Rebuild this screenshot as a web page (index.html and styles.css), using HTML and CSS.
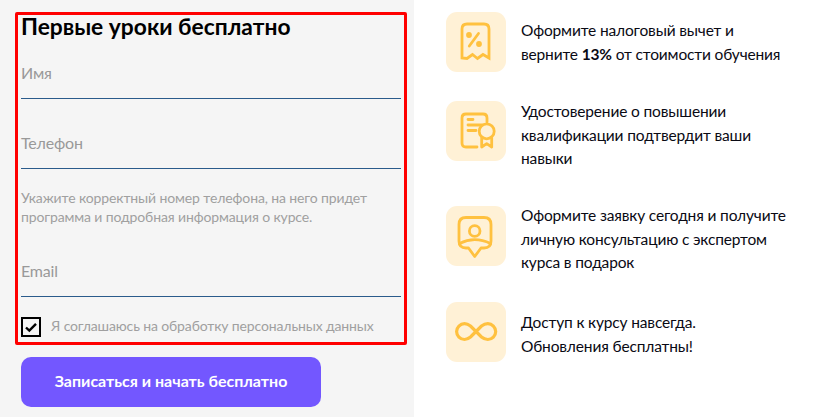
FILE: index.html
```html
<!DOCTYPE html>
<html lang="ru">
<head>
<meta charset="utf-8">
<title>Первые уроки бесплатно</title>
<link rel="stylesheet" href="styles.css">
</head>
<body>
<main class="page">
  <section class="panel">
    <form class="form">
      <h2 class="title">Первые уроки бесплатно</h2>
      <div class="field field-name"><span class="placeholder">Имя</span></div>
      <div class="field field-phone"><span class="placeholder">Телефон</span></div>
      <p class="hint">Укажите корректный номер телефона, на него придет<br>программа и подробная информация о курсе.</p>
      <div class="field field-email"><span class="placeholder">Email</span></div>
      <div class="agree">
        <span class="check">
          <svg viewBox="0 0 16 16" width="16" height="16"><path d="M3 8.500 L6.300 11.600 L13 4.800" fill="none" stroke="#000" stroke-width="2.400"/></svg>
        </span>
        <span class="agree-text">Я соглашаюсь на обработку персональных данных</span>
      </div>
    </form>
    <button class="submit" type="button">Записаться и начать бесплатно</button>
  </section>
  <section class="benefits">
    <div class="benefit b1">
      <div class="icon">
        <svg viewBox="0 0 60 60" width="60" height="60" fill="none" stroke="#ffc13f" stroke-width="2.800" stroke-linecap="round" stroke-linejoin="round">
          <path d="M16 46 V17 Q16 12 21 12 H38 Q43 12 43 17 V46 L37 42.500 L31.500 46.500 L26.500 42.500 L21 46.500 Z" stroke-linejoin="miter"/>
          <path d="M23.300 34 L32.500 21.500"/>
          <circle cx="23" cy="23" r="1.500" fill="#ffc13f"/>
          <circle cx="33" cy="32" r="1.500" fill="#ffc13f"/>
        </svg>
      </div>
      <p class="text">Оформите налоговый вычет и<br>верните <b>13%</b> от стоимости обучения</p>
    </div>
    <div class="benefit b2">
      <div class="icon">
        <svg viewBox="0 0 60 60" width="60" height="60" fill="none" stroke="#ffc13f" stroke-width="2.800" stroke-linecap="round" stroke-linejoin="round">
          <path d="M31 46 H20 Q16 46 16 42 V17 Q16 13 20 13 H37 Q41 13 41 17 V21"/>
          <path d="M22 18.500 H27 M22 24 H36 M22 29.500 H30"/>
          <circle cx="40.700" cy="30.300" r="7.500"/>
          <path d="M35.700 37 V46 L40.700 42.700 L45.700 46 V37"/>
        </svg>
      </div>
      <p class="text">Удостоверение о повышении<br>квалификации подтвердит ваши<br>навыки</p>
    </div>
    <div class="benefit b3">
      <div class="icon">
        <svg viewBox="0 0 60 60" width="60" height="60" fill="none" stroke="#ffc13f" stroke-width="2.800" stroke-linecap="round" stroke-linejoin="round">
          <path d="M20 11.500 H38 Q45 11.500 45 18.500 V35 Q45 42 38 42 H35 L28.700 50.500 L22.500 42 H20 Q13 42 13 35 V18.500 Q13 11.500 20 11.500 Z"/>
          <circle cx="28.700" cy="25" r="5.300"/>
          <path d="M13.500 37.500 Q21 33.700 28.700 33.700 Q36.500 33.700 44.500 37.500"/>
        </svg>
      </div>
      <p class="text">Оформите заявку сегодня и получите<br>личную консультацию с экспертом<br>курса в подарок</p>
    </div>
    <div class="benefit b4">
      <div class="icon">
        <svg viewBox="0 0 60 60" width="60" height="60" fill="none" stroke="#ffc13f" stroke-width="3.200" stroke-linecap="round">
          <path d="M30 29.500 L24.500 35 Q21.500 37.500 18.500 37.500 A7.900 7.900 0 0 1 18.500 21.700 Q21.500 21.700 24.500 24 L35.500 35 Q38.500 37.500 41.800 37.500 A7.900 7.900 0 0 0 41.800 21.700 Q38.500 21.700 35.500 24 L30 29.500"/>
        </svg>
      </div>
      <p class="text">Доступ к курсу навсегда.<br>Обновления бесплатны!</p>
    </div>
  </section>
</main>
</body>
</html>
```
FILE: styles.css
```css
* { box-sizing: border-box; }
html, body { margin: 0; padding: 0; background: #fff; }
body { width: 821px; height: 417px; overflow: hidden; font-family: "Lato", "Open Sans", sans-serif; }
.page { display: flex; height: 417px; }
.panel { width: 414px; height: 417px; background: #f5f5f5; padding: 12px 0 0 15px; flex: none; }
.form { width: 392px; height: 333px; border: 3px solid #f00; border-radius: 2px; padding: 0 3px; }
.title { margin: 0; font-size: 22.800px; line-height: 22px; font-weight: 700; color: #000; }
.field { border-bottom: 1px solid #2a5b8b; color: #999; font-size: 16px; line-height: 20px; letter-spacing: -0.2px; }
.field-name { margin-top: 16px; height: 46px; padding-top: 10px; }
.field-phone { margin-top: 24px; height: 46px; padding-top: 10px; }
.field-email { margin-top: 25px; height: 46px; padding-top: 10px; }
.placeholder { display: block; }
.hint { margin: 19px 0 0; font-size: 14px; line-height: 19px; color: #a0a0a0; letter-spacing: -0.12px; }
.agree { display: flex; align-items: center; margin-top: 20px; }
.check { width: 20px; height: 20px; border: 2px solid #000; display: flex; align-items: center; justify-content: center; flex: none; }
.agree-text { margin: -2px 0 0 10px; font-size: 14px; color: #a0a0a0; line-height: 18px; letter-spacing: -0.13px; }
.submit { display: block; margin: 12px 0 0 6px; width: 300px; height: 50px; padding: 0 0 3px; border: 0; border-radius: 10px; background: #7357ff; color: #fff; font: 700 16px "Lato", sans-serif; }
.benefits { padding: 12px 0 0 32px; flex: 1; }
.benefit { display: flex; align-items: flex-start; height: 60px; }
.b2 { margin-top: 29px; }
.b3 { margin-top: 45px; }
.b4 { margin-top: 36px; }
.icon { width: 60px; height: 60px; background: #fff1d6; border-radius: 11px; flex: none; }
.icon svg { display: block; }
.text { margin: 0 0 0 15px; font-size: 15.500px; line-height: 23.500px; letter-spacing: -0.15px; color: #0a0a14; white-space: nowrap; }
.b1 .text { margin-top: 7px; }
.b2 .text { margin-top: -1px; }
.b3 .text { margin-top: -2px; }
.b4 .text { margin-top: 9px; }
```
